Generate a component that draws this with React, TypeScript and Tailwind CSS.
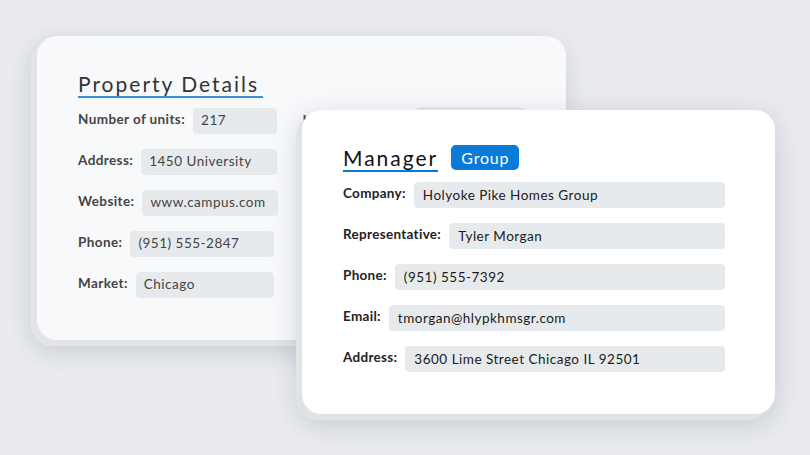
const font = { fontFamily: 'Lato, "Noto Sans", sans-serif' }

type Row = { label: string; value: string; fieldWidth: string }

const propertyRows: Row[] = [
  { label: 'Number of units:', value: '217', fieldWidth: 'w-[84px]' },
  { label: 'Address:', value: '1450 University', fieldWidth: 'w-[136px]' },
  { label: 'Website:', value: 'www.campus.com', fieldWidth: 'w-[136px]' },
  { label: 'Phone:', value: '(951) 555-2847', fieldWidth: 'w-[144px]' },
  { label: 'Market:', value: 'Chicago', fieldWidth: 'w-[138px]' },
]

const managerRows = [
  { label: 'Company:', value: 'Holyoke Pike Homes Group' },
  { label: 'Representative:', value: 'Tyler Morgan' },
  { label: 'Phone:', value: '(951) 555-7392' },
  { label: 'Email:', value: 'tmorgan@hlypkhmsgr.com' },
  { label: 'Address:', value: '3600 Lime Street Chicago IL 92501' },
]

function PropertyCard() {
  return (
    <div className="w-[529px] h-[304px] rounded-[20px] bg-[#f8f9fb] pl-[41px] pt-[36px] shadow-[-6px_6px_0_#e2e4e8,-4px_10px_26px_rgba(50,55,85,0.2)]">
      <h2 className="inline-block text-[21px] leading-[24px] tracking-[2px] text-[#333] border-b-[2px] border-[#3a8fd9] pr-[4px]">
        Property Details
      </h2>
      <div className="flex gap-[22px] mt-[9px]">
        <div className="flex flex-col gap-[14px]">
          {propertyRows.map((r) => (
            <div key={r.label} className="flex items-center gap-[8px] h-[27px]">
              <span className="text-[13.5px] font-bold text-[#444] tracking-[0.4px] -mt-[2px]">{r.label}</span>
              <div
                className={`${r.fieldWidth} h-[26px] rounded-[4px] bg-[#e7eaed] flex items-center pl-[8px] text-[13.5px] text-[#444] tracking-[0.5px]`}
              >
                {r.value}
              </div>
            </div>
          ))}
        </div>
        <div className="flex items-start gap-[10px] ml-[2px]">
          <span className="text-[13.5px] font-bold text-[#444] leading-[27px]">Lot size:</span>
          <div className="w-[108px] h-[24px] rounded-[4px] bg-[#e7eaed] ml-[55px]" />
        </div>
      </div>
    </div>
  )
}

function ManagerCard() {
  return (
    <div className="absolute left-[302px] top-[110px] w-[473px] h-[304px] rounded-[20px] bg-white pl-[41px] pr-[50px] pt-[36px] shadow-[-6px_6px_0_#e0e3e6,-2px_8px_28px_rgba(50,55,95,0.22)]">
      <div className="flex items-center gap-[13px]">
        <h2 className="text-[21px] leading-[24px] tracking-[2px] text-[#111] border-b-[2px] border-[#0a78d6]">
          Manager
        </h2>
        <span className="h-[25px] rounded-[5px] bg-[#0a7bd9] px-[10px] flex items-center text-white text-[16px] tracking-[0.8px] -mt-[3px]">
          Group
        </span>
      </div>
      <div className="flex flex-col gap-[15px] mt-[10px]">
        {managerRows.map((r) => (
          <div key={r.label} className="flex items-center gap-[8px] h-[26px]">
            <span className="text-[13.5px] font-bold text-[#222] tracking-[0.3px] -mt-[3px]">{r.label}</span>
            <div className="flex-1 h-[26px] rounded-[4px] bg-[#e7eaed] flex items-center pl-[9px] text-[13.5px] text-[#1a1a1a] tracking-[0.5px]">
              {r.value}
            </div>
          </div>
        ))}
      </div>
    </div>
  )
}

export default function App() {
  return (
    <div className="relative w-[810px] h-[455px] overflow-hidden bg-[#e9ebee] pl-[37px] pt-[36px]" style={font}>
      <PropertyCard />
      <ManagerCard />
    </div>
  )
}
